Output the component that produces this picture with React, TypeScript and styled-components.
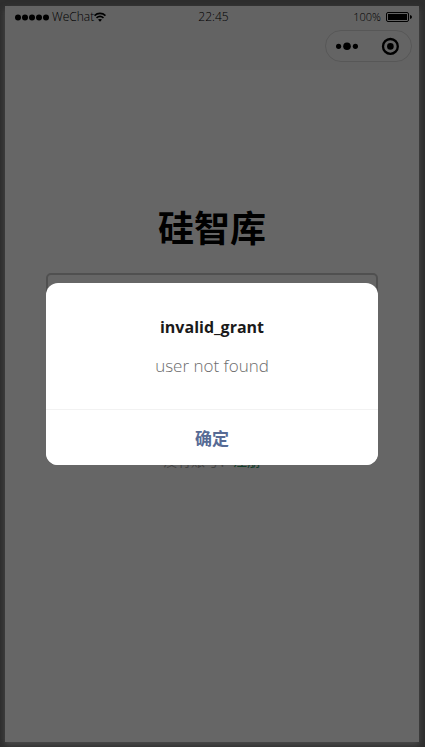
import React from "react";
import styled, { createGlobalStyle } from "styled-components";

const GlobalStyle = createGlobalStyle`
  *, *::before, *::after { box-sizing: border-box; }
  body {
    margin: 0;
    background: #2e2e2e;
    color: #000;
    font-family: "Open Sans", "Noto Sans", "Noto Sans CJK SC", sans-serif;
  }
`;

const Stage = styled.main`
  display: flex;
  min-height: 100vh;
  padding: 6px 6px 5px 5px;
`;

const Phone = styled.div`
  position: relative;
  flex: 1;
  display: flex;
  flex-direction: column;
  background: #fff;
  box-shadow: 0 3px 6px 0 #4c4c4c;
`;

const Header = styled.header`
  height: 64px;
  background: #f7f7f7;
`;

const StatusBar = styled.div`
  display: grid;
  grid-template-columns: 1fr auto 1fr;
  align-items: center;
  height: 22px;
  padding: 0 7px 0 10px;
  line-height: 22px;
`;

const StatusGroup = styled.div<{ $end?: boolean }>`
  display: flex;
  align-items: center;
  justify-content: ${(p) => (p.$end ? "flex-end" : "flex-start")};
  gap: ${(p) => (p.$end ? "5px" : "0")};
`;

const StatusText = styled.span<{ $size: number }>`
  font-size: ${(p) => p.$size}px;
  font-weight: 300;
`;

const SignalIcon = styled.svg`
  width: 35px;
  height: 8px;
  margin-right: 2px;
`;

const NavBar = styled.div`
  display: flex;
  justify-content: flex-end;
  padding: 2px 7px 0;
`;

const Capsule = styled.div`
  display: grid;
  grid-template-columns: 1fr 1fr;
  width: 87px;
  height: 32px;
  border: 1px solid #dadada;
  border-radius: 16px;
  background: #fafafa;
`;

const CapsuleButton = styled.button`
  display: grid;
  place-items: center;
  padding: 0;
  border: 0;
  background: none;
`;

const LoginPage = styled.section`
  display: flex;
  flex-direction: column;
  padding: 132px 41px 0;
`;

const Brand = styled.h1`
  margin: 0;
  font-size: 36px;
  line-height: 54px;
  font-weight: 700;
  text-align: center;
`;

const Field = styled.input`
  width: 100%;
  height: 48px;
  margin-top: 17px;
  padding: 0 12px;
  border: 2px solid #c8c8c8;
  border-radius: 5px;
  background: transparent;
`;

const SignUp = styled.p`
  margin: 130px 0 0;
  font-size: 14px;
  line-height: 20px;
  text-align: center;
  color: #aaa;
`;

const SignUpLink = styled.a`
  color: #2f9a68;
  text-decoration: none;
`;

const Mask = styled.div`
  position: absolute;
  inset: 0;
  display: grid;
  place-items: center;
  padding: 0 41px;
  background: rgba(0, 0, 0, 0.6);
`;

const Dialog = styled.div`
  width: 100%;
  overflow: hidden;
  border-radius: 12px;
  background: #fff;
  text-align: center;
`;

const DialogTitle = styled.h2`
  margin: 0;
  padding: 32px 24px 15px;
  font-size: 16px;
  line-height: 24px;
  font-weight: 700;
  color: #1a1a1a;
`;

const DialogText = styled.p`
  margin: 0;
  padding: 0 24px 31px;
  font-size: 17px;
  line-height: 24px;
  font-weight: 300;
  color: #6c6c6c;
`;

const ConfirmButton = styled.button`
  display: block;
  width: 100%;
  height: 56px;
  padding: 0;
  border: 0;
  border-top: 1px solid #f2f2f2;
  background: #fff;
  color: #576b95;
  font-family: inherit;
  font-size: 17px;
  font-weight: 700;
`;

export default function App() {
  return (
    <>
      <GlobalStyle />
      <Stage>
        <Phone>
          <Header>
            <StatusBar>
              <StatusGroup>
                <SignalIcon viewBox="0 0 35 8" aria-hidden="true">
                  {[3, 10, 17, 24, 31].map((x) => (
                    <circle key={x} cx={x} cy="4.5" r="3" />
                  ))}
                </SignalIcon>
                <StatusText $size={12}>WeChat</StatusText>
                <svg width="12" height="10" viewBox="0 0 12 10" aria-hidden="true">
                  <path d="M0.5 3.6C3.6.6 8.4.6 11.5 3.6M2.5 5.9C4.6 4 7.4 4 9.5 5.9" fill="none" stroke="#000" strokeWidth="1.6" />
                  <path d="M4 7.6Q6 6.2 8 7.6L6 9.8Z" />
                </svg>
              </StatusGroup>
              <StatusText $size={12}>22:45</StatusText>
              <StatusGroup $end>
                <StatusText $size={11}>100%</StatusText>
                <svg width="26" height="10" viewBox="0 0 26 10" aria-hidden="true">
                  <rect x="0.5" y="0.5" width="22" height="9" rx="1.5" fill="none" stroke="#000" />
                  <rect x="2" y="2" width="19" height="6" />
                  <path d="M24 3Q26 3.5 26 5T24 7Z" />
                </svg>
              </StatusGroup>
            </StatusBar>
            <NavBar>
              <Capsule>
                <CapsuleButton type="button" aria-label="More">
                  <svg width="22" height="8" viewBox="0 0 22 8">
                    <circle cx="2.6" cy="4.3" r="2.6" />
                    <circle cx="11" cy="4.2" r="3.8" />
                    <circle cx="19.4" cy="4.3" r="2.6" />
                  </svg>
                </CapsuleButton>
                <CapsuleButton type="button" aria-label="Close">
                  <svg width="18" height="18" viewBox="0 0 18 18">
                    <circle cx="9.4" cy="9.4" r="7.4" fill="none" stroke="#000" strokeWidth="2.3" />
                    <circle cx="9.4" cy="9.4" r="3.3" />
                  </svg>
                </CapsuleButton>
              </Capsule>
            </NavBar>
          </Header>
          <LoginPage>
            <Brand>硅智库</Brand>
            <Field type="text" aria-label="账号" />
            <SignUp>
              没有账号？<SignUpLink href="#register">注册</SignUpLink>
            </SignUp>
          </LoginPage>
          <Mask>
            <Dialog role="alertdialog" aria-modal="true" aria-labelledby="dialog-title" aria-describedby="dialog-text">
              <DialogTitle id="dialog-title">invalid_grant</DialogTitle>
              <DialogText id="dialog-text">user not found</DialogText>
              <ConfirmButton type="button">确定</ConfirmButton>
            </Dialog>
          </Mask>
        </Phone>
      </Stage>
    </>
  );
}
